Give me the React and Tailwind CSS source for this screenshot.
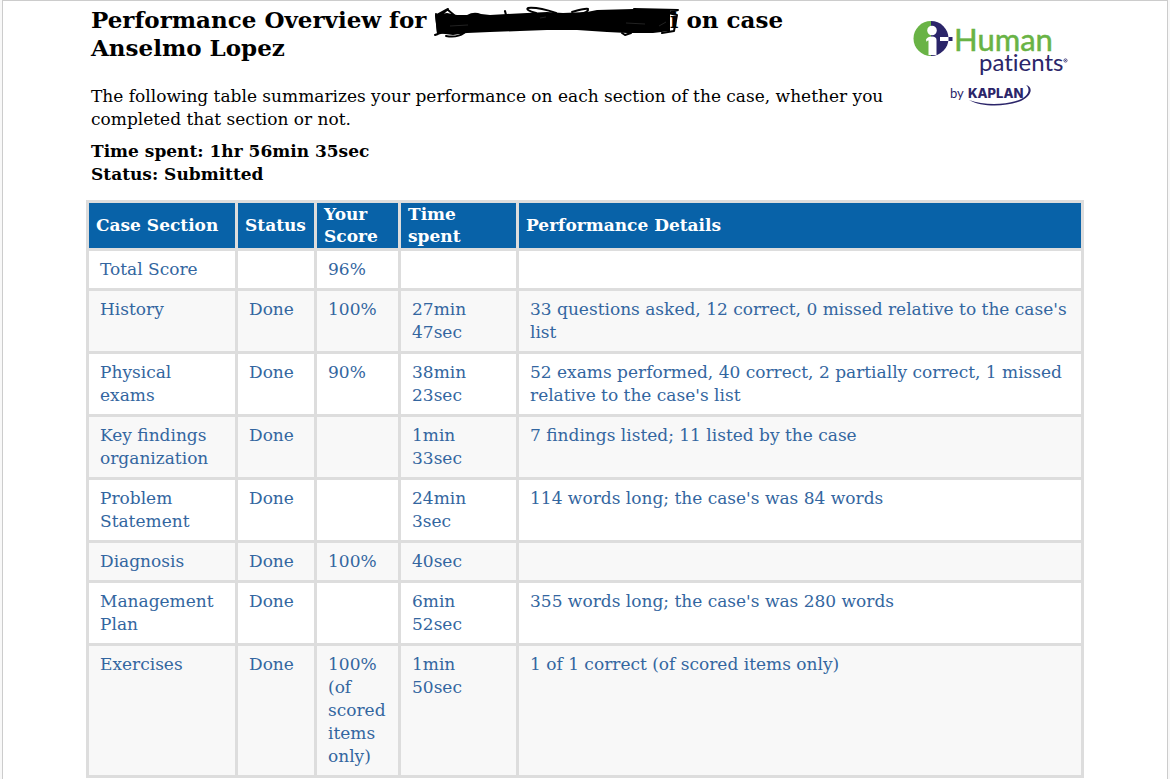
const rows = [
  { section: 'Total Score', status: '', score: '96%', time: '', details: '' },
  { section: 'History', status: 'Done', score: '100%', time: '27min 47sec', details: "33 questions asked, 12 correct, 0 missed relative to the case's list" },
  { section: 'Physical exams', status: 'Done', score: '90%', time: '38min 23sec', details: "52 exams performed, 40 correct, 2 partially correct, 1 missed relative to the case's list" },
  { section: 'Key findings organization', status: 'Done', score: '', time: '1min 33sec', details: '7 findings listed; 11 listed by the case' },
  { section: 'Problem Statement', status: 'Done', score: '', time: '24min 3sec', details: "114 words long; the case's was 84 words" },
  { section: 'Diagnosis', status: 'Done', score: '100%', time: '40sec', details: '' },
  { section: 'Management Plan', status: 'Done', score: '', time: '6min 52sec', details: "355 words long; the case's was 280 words" },
  { section: 'Exercises', status: 'Done', score: '100% (of scored items only)', time: '1min 50sec', details: '1 of 1 correct (of scored items only)' },
]

function Logo() {
  return (
    <svg
      width="160" height="92" viewBox="0 0 160 92"
      role="img" aria-label="i-Human Patients by Kaplan"
      className="shrink-0 font-['Lato',sans-serif] [font-variant-ligatures:none]"
    >
      <path d="M19 1 A17.5 17.5 0 0 0 19 36 Z" fill="#69b345" />
      <path d="M19 1 A17.5 17.5 0 0 1 19 36 Z" fill="#2b2569" />
      {/* figure in the roundel */}
      <circle cx="20" cy="10.5" r="4.8" fill="#fff" />
      <path d="M14 19.5 C15 17.5 17 16.5 20 16.5 C23 16.5 24.5 18 24.5 20 V35 H16.5 V20.5 C15.5 20.5 15 21 14.5 22 Z" fill="#fff" />
      {/* dash */}
      <rect x="28" y="17" width="9" height="4" fill="#fff" />
      <rect x="36.5" y="17" width="4" height="4" fill="#2b2569" />
      <text x="42" y="31" fontSize="31" fill="#69b345" stroke="#69b345" strokeWidth="0.5">Human</text>
      <text x="67" y="51" fontSize="24" fill="#2b2569">patients</text>
      <circle cx="153.5" cy="40.5" r="1.6" fill="none" stroke="#2b2569" strokeWidth="0.8" />
      <circle cx="153.5" cy="40.5" r="0.6" fill="#2b2569" />
      <text x="38" y="78" fontSize="13" fill="#2b2569">by</text>
      <text x="56" y="78" fontSize="13" fontWeight="800" fill="#2b2569" fontFamily="Inter, sans-serif">KAPLAN</text>
      <path d="M114 65 C122 67 120 77 106 82 C91 87 69 87 57 80 C71 85 90 85 104 81 C117 77 119 69 114 65 Z" fill="#2b2569" />
    </svg>
  )
}

// Marker strokes that hide the student's name
function Scribble() {
  return (
    <svg width="250" height="34" viewBox="0 0 250 34" aria-hidden="true" className="absolute left-0 top-0">
      <path d="M1 9 L13 7 L23 9 L33 9 Q40 5 47 8 L56 9 L73 8 L93 7 L113 6 L129 7 L153 6 L163 4 L199 3 L236 4 L236 25 L219 27 L193 27 L173 26 L143 24 L113 24 L86 25 L56 26 L33 27 L19 29 L3 27 Z" />
      <g fill="none" stroke="#000" strokeWidth="2" strokeLinecap="round" strokeLinejoin="round">
        <path d="M2 8 L4 28 L1 29 Q12 24 30 27 Q23 32 12 30" />
        <path d="M3 9 L14 3 L6 10 M14 4 L20 9" />
        <path d="M122 7 Q104 1 94 2 Q91 4 102 7" />
        <path d="M138 6 Q152 2 154 3 Q155 6 146 8" />
        <path d="M200 3 L244 4 L234 7 L243 9 L240 25 L228 27" />
        <path d="M188 27 L191 29 L197 27" />
        <path d="M71 5 L72 9" />
      </g>
      <path d="M192 17 L211 18 M16 20 L34 19 M106 12 L112 11 M225 20 L232 16" fill="none" stroke="#444" strokeWidth="0.5" />
    </svg>
  )
}

const cell = 'border-[3px] border-[#dddddd] px-[11px] py-[7px] align-top'
const head = 'border-[3px] border-[#dddddd] px-[7px] pb-px text-left align-middle'

export default function App() {
  return (
    <div className="bg-[#f8f8f8] px-[2px] font-['DejaVu_Serif',serif] text-[17px] leading-[23px] text-black">
      <main className="border border-[#cccccc] bg-white px-[83px] pb-8">
        <header className="flex items-start justify-between gap-4 pl-[5px] pr-3">
          <div className="max-w-[810px] pt-[5px]">
            <h1 className="text-[23px] font-bold leading-[28px]">
              Performance Overview for{' '}
              <span className="relative inline-block w-[244px] text-right">i<Scribble /></span>
              {' '}on case Anselmo Lopez
            </h1>
            <p className="mt-[23px]">
              The following table summarizes your performance on each section of the case, whether you completed that section or not.
            </p>
            <p className="mt-[9px] font-bold">Time spent: 1hr 56min 35sec</p>
            <p className="font-bold">Status: Submitted</p>
          </div>
          <div className="pt-[19px]"><Logo /></div>
        </header>

        <table className="mt-[14px] w-full table-fixed border-collapse text-[#3366a0]">
          <colgroup>
            <col className="w-[149px]" />
            <col className="w-[79px]" />
            <col className="w-[84px]" />
            <col className="w-[118px]" />
            <col />
          </colgroup>
          <thead>
            <tr className="bg-[#0862a8] leading-[22px] text-white">
              <th className={head}>Case Section</th>
              <th className={head}>Status</th>
              <th className={head}>Your Score</th>
              <th className={head}>Time spent</th>
              <th className={head}>Performance Details</th>
            </tr>
          </thead>
          <tbody>
            {rows.map(row => (
              <tr key={row.section} className="even:bg-[#f8f8f8]">
                <td className={cell}>{row.section}</td>
                <td className={cell}>{row.status}</td>
                <td className={cell}>{row.score}</td>
                <td className={cell}>{row.time}</td>
                <td className={cell}>{row.details}</td>
              </tr>
            ))}
          </tbody>
        </table>
      </main>
    </div>
  )
}
